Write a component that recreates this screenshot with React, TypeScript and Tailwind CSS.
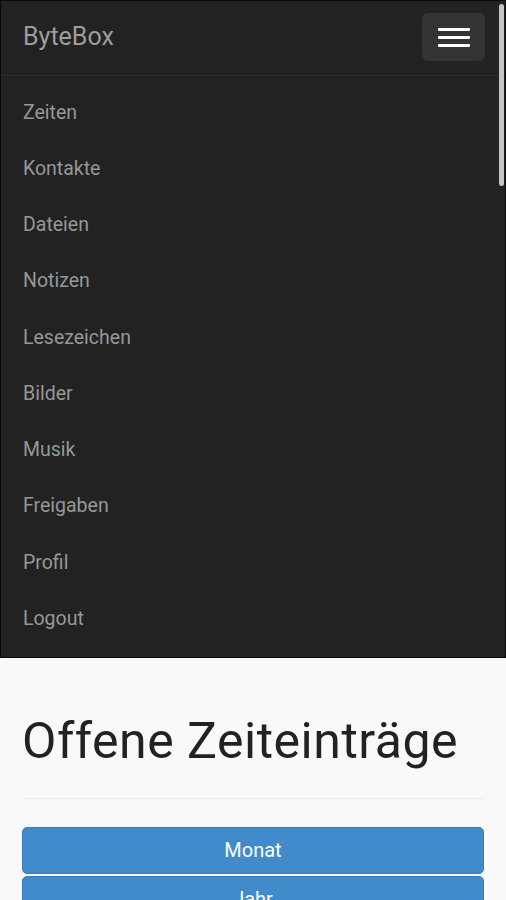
const links = [
  'Zeiten',
  'Kontakte',
  'Dateien',
  'Notizen',
  'Lesezeichen',
  'Bilder',
  'Musik',
  'Freigaben',
  'Profil',
  'Logout',
];

export default function App() {
  return (
    <div className="relative min-h-[900px] overflow-hidden bg-[#f9f9f9] font-['Roboto',sans-serif]">
      {/* Navbar, expanded */}
      <nav className="border border-[#080808] bg-[#222222]">
        <div className="flex h-[74px] items-center justify-between pb-[2px] pl-[22px] pr-[20px]">
          <span className="text-[25px] text-[#9d9d9d]">ByteBox</span>
          <button className="flex h-[48px] w-[63px] flex-col items-center justify-center gap-[5px] rounded-[6px] bg-[#333333]">
            <span className="block h-[3px] w-[32px] rounded-[1px] bg-white" />
            <span className="block h-[3px] w-[32px] rounded-[1px] bg-white" />
            <span className="block h-[3px] w-[32px] rounded-[1px] bg-white" />
          </button>
        </div>
        <ul className="border-t border-[#2d2d2d] pb-[10px] pt-[8px]">
          {links.map((link) => (
            <li key={link} className="flex h-[56.25px] items-center pl-[22px] text-[19.5px] text-[#979797]">
              {link}
            </li>
          ))}
        </ul>
      </nav>

      {/* Scrollbar overlay */}
      <div className="absolute right-[2px] top-[4px] h-[182px] w-[5px] rounded-full bg-[#c4c4c4]" />

      <main className="px-[22px] pt-[56px]">
        <h1 className="text-[50px] leading-[55px] tracking-[0.5px] text-[#222222]">Offene Zeiteinträge</h1>
        <hr className="mt-[29px] border-[#ececec]" />
        <div className="mt-[28px] flex flex-col gap-[2px]">
          <button className="h-[47px] rounded-[5px] border border-[#357ebd] bg-[#428bca] text-[20px] text-white">
            Monat
          </button>
          <button className="h-[47px] rounded-[5px] border border-[#357ebd] bg-[#428bca] text-[20px] text-white">
            Jahr
          </button>
        </div>
      </main>
    </div>
  );
}
